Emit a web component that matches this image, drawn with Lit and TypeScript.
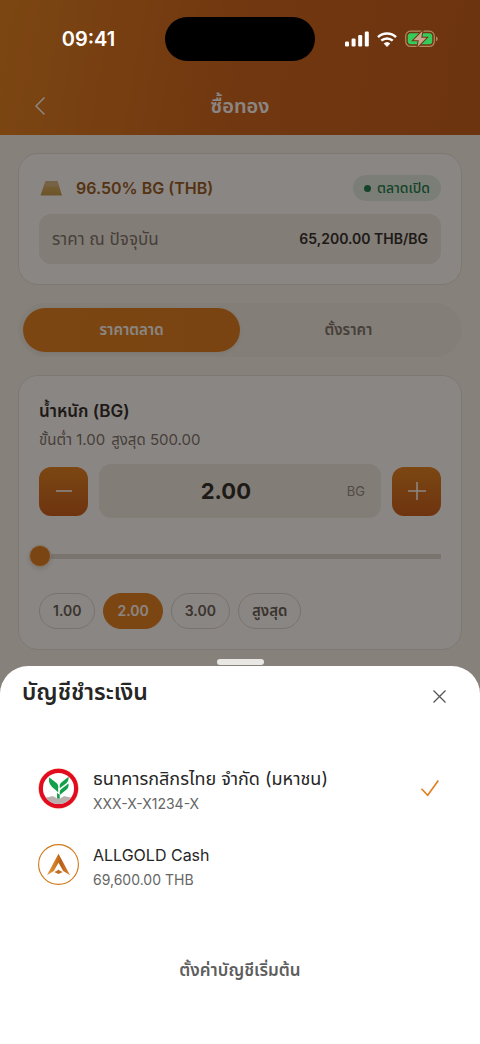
import { LitElement, html, css, svg } from "lit";
import { customElement, state } from "lit/decorators.js";
import { classMap } from "lit/directives/class-map.js";

const kasikornLogo = svg`
  <svg class="logo" viewBox="0 0 40 40" aria-hidden="true">
    <circle cx="20" cy="20" r="19.700" fill="#f3c9a0" />
    <circle cx="20" cy="20" r="17.200" fill="#fff" stroke="#e30b20" stroke-width="4" />
    <path d="M10.800 9L18.300 14.800Q19.700 16 19.700 17.800V23.600L13.700 18.600Q11 16.300 10.800 13z" fill="#12a04a" />
    <path d="M29.800 8.600L22.500 14.400Q21.200 15.500 21.200 17V19.800L27.600 14.800Q29.800 13 29.800 10.800z" fill="#12a04a" />
    <path d="M29.800 15.200L22.500 20.800Q21.200 21.900 21.200 23.400V30H18.600V24.200L19.700 25 21.200 26.300 27.600 21.200Q29.800 19.400 29.800 17.200z" fill="#12a04a" />
    <clipPath id="disc"><circle cx="20" cy="20" r="15.200" /></clipPath>
    <path clip-path="url(#disc)" d="M4 30c2.500-.6 4.600-1.400 7-1.600 2-1.300 4.600-1 6.600.8 1.700 1.200 3.200 1.200 4.900 0 2-1.800 4.500-2 6.500-.8 2.500.1 4.500 1 7 1.600-2 3.500-5 6-8 7H12c-3-1-6-3.500-8-7z" fill="#b7b0ad" />
  </svg>`;

const allgoldLogo = svg`
  <svg class="logo" viewBox="0 0 40 40" aria-hidden="true">
    <defs>
      <linearGradient id="gold" x1="0" y1="0" x2="1" y2="0">
        <stop offset="0" stop-color="#e79a3e" />
        <stop offset=".45" stop-color="#c9721f" />
        <stop offset=".6" stop-color="#b85f18" />
        <stop offset="1" stop-color="#d98534" />
      </linearGradient>
    </defs>
    <circle cx="20" cy="20" r="19.400" fill="#fff" stroke="#d07b1c" stroke-width="1.100" />
    <path d="M20 9.500L31.300 30.500 24.600 26.400 20 18.400 15.400 26.400 8.700 30.500z" fill="url(#gold)" />
    <path d="M15.800 27.200l2.800-1.100 1.400-1.300 1.400 1.300 2.800 1.100-4.200 2z" fill="#c46c1e" />
  </svg>`;

@customElement("app-root")
export class AppRoot extends LitElement {
  static styles = css`
    :host {
      display: block;
      position: relative;
      min-height: 100vh;
      box-sizing: border-box;
      overflow: hidden;
      background: #f7f6ee;
      color: #262626;
      font-family: Inter, "Noto Sans Thai", "Noto Sans", sans-serif;
      font-size: 14px;
      line-height: 20px;
    }
    *, *::before { box-sizing: border-box; }
    button, input { font: inherit; color: inherit; margin: 0; }
    button { border: 0; padding: 0; background: none; cursor: pointer; }
    h1, h2, p { margin: 0; }
    svg { display: block; flex: none; }

    .status-bar {
      position: absolute;
      inset: 0 0 auto;
      z-index: 3;
      display: grid;
      grid-template-columns: 1fr 150px 1fr;
      align-items: center;
      height: 78px;
      color: #fff;
    }
    .time { padding-left: 12px; text-align: center; font-size: 20px; font-weight: 600; }
    .island { height: 44px; border-radius: 22px; background: #000; }
    .indicators { display: flex; align-items: center; justify-content: center; gap: 8px; padding-right: 13px; }

    .top { padding-top: 76px; background: linear-gradient(100deg, #e37f1d 0%, #cd6119 50%, #c45a19 100%); }
    .nav { display: grid; grid-template-columns: 48px 1fr 48px; align-items: center; height: 59px; padding: 0 16px; color: #fff; }
    .back { display: grid; place-items: center; height: 40px; }
    .nav-title { text-align: center; font-size: 20px; line-height: 24px; font-weight: 600; }

    .content { display: grid; gap: 18px; padding: 18px 18px 0; }
    .card { padding: 20px; border: 1px solid #e6e2de; border-radius: 20px; background: #fff; }
    .product { display: flex; align-items: center; gap: 13px; height: 28px; }
    .name { flex: 1; color: #94581c; font-size: 16px; font-weight: 600; }
    .market { display: flex; align-items: center; gap: 6px; height: 26px; padding: 0 11px; border-radius: 13px; background: #e0efe6; color: #11794a; font-weight: 500; }
    .dot { width: 7px; height: 7px; border-radius: 50%; background: currentColor; }
    .price { display: flex; align-items: center; justify-content: space-between; height: 50px; margin-top: 12px; padding: 0 13px; border-radius: 12px; background: #eeece6; }
    .price-label { color: #77716c; font-size: 17px; }
    .price-value { font-weight: 600; }
    .tabs { display: grid; grid-template-columns: 1fr 1fr; height: 54px; padding: 5px; border-radius: 27px; background: #f0eee7; }
    .tab { border-radius: 22px; color: #77716c; font-size: 15px; font-weight: 600; }
    .tab.on { background: linear-gradient(100deg, #e37f1d, #dd7a1c); color: #fff; box-shadow: 0 1px 4px #0001; }

    .weight { padding-top: 24px; }
    .label { display: block; font-size: 17px; line-height: 22px; font-weight: 600; }
    .limits { display: flex; gap: 6px; margin-top: 8px; color: #77716c; font-size: 15px; }
    .stepper { display: flex; align-items: center; gap: 11px; margin-top: 14px; }
    .step { display: grid; place-items: center; width: 49px; height: 49px; border-radius: 12px; background: linear-gradient(#e2801d, #c65a18); color: #fff; }
    .field { display: flex; flex: 1; align-items: center; gap: 10px; min-width: 0; height: 54px; padding: 0 16px; border-radius: 12px; background: #eeece6; }
    .amount { flex: 1; width: 0; min-width: 0; padding: 0; border: 0; outline: 0; background: none; text-align: center; font-size: 22px; line-height: 28px; font-weight: 700; }
    .unit { color: #8e8882; font-size: 13px; }
    .range { display: block; width: calc(100% + 20px); height: 22px; margin: 27px -10px 0; appearance: none; background: linear-gradient(#dedbd5, #dedbd5) center / calc(100% - 20px) 5px no-repeat; outline: 0; }
    .range::-webkit-slider-thumb { appearance: none; width: 22px; height: 22px; border: 1px solid #f8dcb8; border-radius: 50%; background: #e07d1e; box-shadow: 0 2px 5px #0002; }
    .chips { display: flex; gap: 8px; margin-top: 26px; }
    .chip { height: 36px; padding: 0 13px; border: 1px solid #dcd8d4; border-radius: 18px; color: #5f5a56; font-weight: 600; }
    .chip.on { border-color: #e37f1d; background: #e37f1d; color: #fff; }
    .chip.word { font-size: 15px; }

    .backdrop { position: absolute; inset: 0; z-index: 2; background: rgba(21, 13, 7, 0.5); }
    .sheet { position: absolute; inset: auto 0 0; z-index: 4; display: grid; justify-items: center; }
    .handle { width: 47px; height: 6px; margin-bottom: 1px; border-radius: 3px; background: #e9e7e4; }
    .panel { width: 100%; padding: 10px 22px 50px; border-radius: 28px 28px 0 0; background: #fff; }
    .sheet-head { display: flex; align-items: flex-start; justify-content: space-between; height: 40px; }
    .sheet-title { font-size: 23px; line-height: 32px; font-weight: 600; }
    .close { display: grid; place-items: center; width: 38px; height: 40px; color: #555; }
    .accounts { margin: 34px 0 0; padding: 0; border: 0; }
    .account { display: flex; align-items: center; gap: 14px; height: 76px; padding: 0 16px; cursor: pointer; }
    .radio { position: absolute; opacity: 0; }
    .logo { width: 41px; height: 41px; }
    .who { flex: 1; display: grid; gap: 2px; padding-top: 5px; }
    .bank { font-size: 16px; line-height: 24px; }
    .bank.thai { font-size: 18px; }
    .detail { color: #666; line-height: 22px; }
    .default { display: block; width: 100%; height: 48px; margin-top: 44px; color: #5e5e5e; font-size: 17px; font-weight: 600; }
  `;

  @state() private mode = "market";
  @state() private amount = "2.00";
  @state() private account = "kbank";

  private setAmount(value: number) {
    this.amount = Math.min(500, Math.max(1, value)).toFixed(2);
  }

  private chip(label: string, value: number, word = false) {
    const on = Number(this.amount) === value;
    return html`<button class=${classMap({ chip: true, on, word })} aria-pressed=${on} @click=${() => this.setAmount(value)}>${label}</button>`;
  }

  private tab(id: string, label: string) {
    const on = this.mode === id;
    return html`<button class=${classMap({ tab: true, on })} role="tab" aria-selected=${on} @click=${() => (this.mode = id)}>${label}</button>`;
  }

  private row(id: string, logo: unknown, name: string, detail: string, thai = false) {
    const checked = this.account === id;
    return html`
      <label class="account">
        <input class="radio" type="radio" name="account" .checked=${checked} @change=${() => (this.account = id)} />
        ${logo}
        <span class="who"><span class=${classMap({ bank: true, thai })}>${name}</span><span class="detail">${detail}</span></span>
        ${checked
          ? html`<svg width="22" height="20" viewBox="0 0 22 20" fill="none" stroke="#e07d1e" stroke-width="1.600" aria-hidden="true"><path d="M1.500 10.800l6.200 6.400L18.300 2.500" /></svg>`
          : ""}
      </label>`;
  }

  render() {
    return html`
      <div class="status-bar">
        <span class="time">09:41</span>
        <span class="island"></span>
        <span class="indicators">
          <svg width="24" height="16" viewBox="0 0 24 16" fill="#fff" aria-hidden="true">
            <rect x="0" y="10.500" width="4" height="5" rx="1.200" /><rect x="6.600" y="7.500" width="4" height="8" rx="1.200" /><rect x="13.200" y="4" width="4" height="11.500" rx="1.200" /><rect x="19.800" y="0.500" width="4" height="15" rx="1.200" />
          </svg>
          <svg width="20" height="15" viewBox="0 0 20 15" fill="none" stroke="#fff" stroke-width="2.500" aria-hidden="true">
            <path d="M1 5.200a13 13 0 0 1 18 0M4.300 8.700a8.300 8.300 0 0 1 11.400 0" />
            <path d="M10 15l-3.300-3.400a4.800 4.800 0 0 1 6.600 0z" fill="#fff" stroke="none" />
          </svg>
          <svg width="33" height="18" viewBox="0 0 33 18" aria-hidden="true">
            <rect x=".7" y="1.200" width="28.600" height="15.200" rx="4.800" fill="none" stroke="#b08a5c" stroke-width="1.200" />
            <rect x="2.800" y="3.300" width="24.400" height="11" rx="3" fill="#35cc5b" />
            <path d="M31 6.400c2.300.8 2.300 4 0 4.800z" fill="#b08a5c" />
            <path d="M17.500 1L8.500 10.200h5.300L12.500 17l9-9.300h-5.300z" fill="#c9a68c" stroke="#6e3410" stroke-width="2" paint-order="stroke" />
          </svg>
        </span>
      </div>

      <header class="top">
        <div class="nav">
          <button class="back" aria-label="ย้อนกลับ">
            <svg width="12" height="20" viewBox="0 0 12 20" fill="none" stroke="currentColor" stroke-width="1.500"><path d="M10.500 1.500L2 10l8.500 8.500" /></svg>
          </button>
          <h1 class="nav-title">ซื้อทอง</h1>
        </div>
      </header>

      <main class="content">
        <section class="card">
          <div class="product">
            <svg width="24" height="16" viewBox="0 0 24 16" aria-hidden="true">
              <defs><linearGradient id="bar" x1="0" y1="0" x2="0" y2="1"><stop offset="0" stop-color="#dcb36c" /><stop offset="1" stop-color="#c39a4a" /></linearGradient></defs>
              <path d="M6.500 1h12L23 15.500H1.500z" fill="url(#bar)" /><path d="M7.500 1h10l2 5.500h-14z" fill="#d6b787" />
            </svg>
            <span class="name">96.50% BG (THB)</span>
            <span class="market"><span class="dot"></span>ตลาดเปิด</span>
          </div>
          <div class="price">
            <span class="price-label">ราคา ณ ปัจจุบัน</span>
            <span class="price-value">65,200.00 THB/BG</span>
          </div>
        </section>

        <div class="tabs" role="tablist">${this.tab("market", "ราคาตลาด")}${this.tab("limit", "ตั้งราคา")}</div>

        <section class="card weight">
          <label class="label" for="weight">น้ำหนัก (BG)</label>
          <p class="limits"><span>ขั้นต่ำ 1.00</span><span>สูงสุด 500.00</span></p>
          <div class="stepper">
            <button class="step" aria-label="ลด" @click=${() => this.setAmount(Number(this.amount) - 1)}>
              <svg width="18" height="18" viewBox="0 0 18 18" stroke="currentColor" stroke-width="1.600"><path d="M1 9h16" /></svg>
            </button>
            <div class="field">
              <input class="amount" id="weight" inputmode="decimal" .value=${this.amount} @change=${(e: Event) => this.setAmount(Number((e.target as HTMLInputElement).value) || 1)} />
              <span class="unit">BG</span>
            </div>
            <button class="step" aria-label="เพิ่ม" @click=${() => this.setAmount(Number(this.amount) + 1)}>
              <svg width="18" height="18" viewBox="0 0 18 18" stroke="currentColor" stroke-width="1.600"><path d="M0 9h18M9 0v18" /></svg>
            </button>
          </div>
          <input class="range" type="range" min="2" max="500" aria-label="น้ำหนัก (BG)" .value=${this.amount} @input=${(e: Event) => this.setAmount(Number((e.target as HTMLInputElement).value))} />
          <div class="chips">${this.chip("1.00", 1)}${this.chip("2.00", 2)}${this.chip("3.00", 3)}${this.chip("สูงสุด", 500, true)}</div>
        </section>
      </main>

      <div class="backdrop"></div>
      <div class="sheet" role="dialog" aria-labelledby="sheet-title">
        <span class="handle"></span>
        <div class="panel">
          <div class="sheet-head">
            <h2 class="sheet-title" id="sheet-title">บัญชีชำระเงิน</h2>
            <button class="close" aria-label="ปิด">
              <svg width="13" height="13" viewBox="0 0 13 13" stroke="currentColor" stroke-width="1.300"><path d="M.5.5l12 12M12.500.5l-12 12" /></svg>
            </button>
          </div>
          <fieldset class="accounts" aria-labelledby="sheet-title">
            ${this.row("kbank", kasikornLogo, "ธนาคารกสิกรไทย จำกัด (มหาชน)", "XXX-X-X1234-X", true)}
            ${this.row("cash", allgoldLogo, "ALLGOLD Cash", "69,600.00 THB")}
          </fieldset>
          <button class="default">ตั้งค่าบัญชีเริ่มต้น</button>
        </div>
      </div>
    `;
  }
}
